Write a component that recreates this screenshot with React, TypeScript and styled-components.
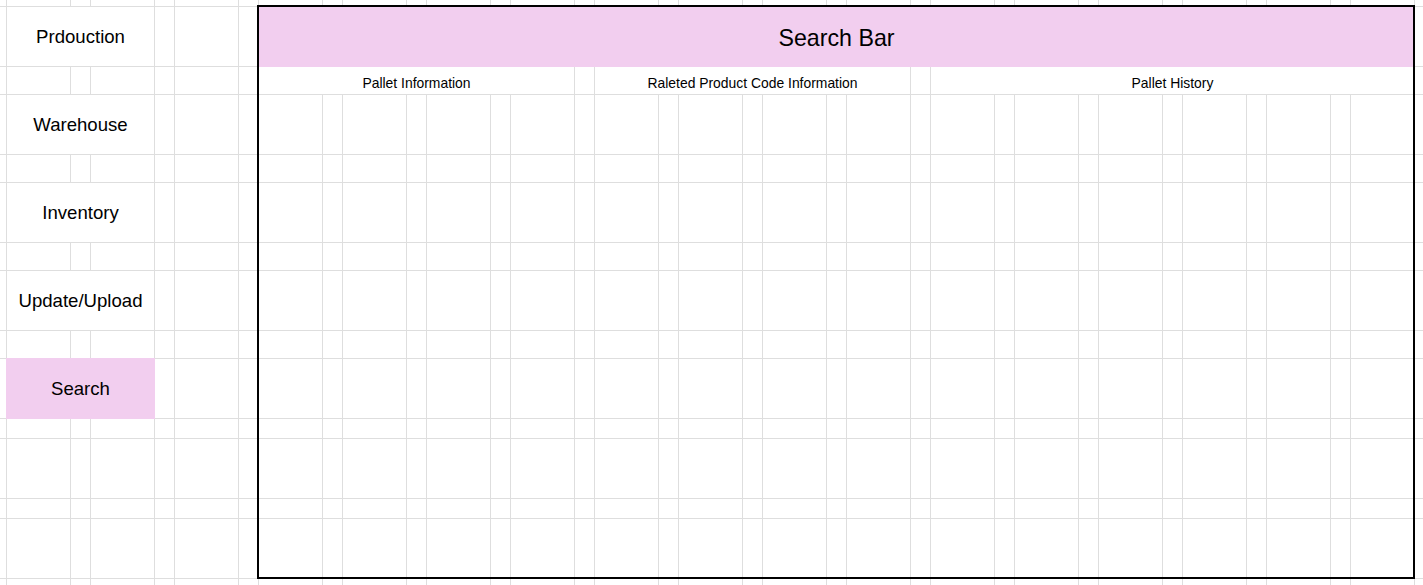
import React from 'react'
import styled, { createGlobalStyle, css } from 'styled-components'

const GRID_LINE = '#dedede'
const PINK = '#f2ceef'

// column / row track sizes, the 1px gap between tracks is the gridline
const COL_WIDTHS = Array.from({ length: 35 }, (_, i) => (i === 0 ? 6 : i % 2 ? 63 : 19))
const ROW_HEIGHTS = [6, 59, 27, 59, 27, 59, 27, 59, 27, 59, 19, 59, 19, 59, 19]

type Kind = 'plain' | 'nav' | 'title' | 'head'

interface Merge {
  row: number
  col: number
  span: number
  kind: Kind
  text: string
  fill?: boolean
}

const MERGES: Merge[] = [
  { row: 1, col: 1, span: 3, kind: 'nav', text: 'Prdouction' },
  { row: 3, col: 1, span: 3, kind: 'nav', text: 'Warehouse' },
  { row: 5, col: 1, span: 3, kind: 'nav', text: 'Inventory' },
  { row: 7, col: 1, span: 3, kind: 'nav', text: 'Update/Upload' },
  { row: 9, col: 1, span: 3, kind: 'nav', text: 'Search', fill: true },
  { row: 1, col: 7, span: 27, kind: 'title', text: 'Search Bar', fill: true },
  { row: 2, col: 7, span: 7, kind: 'head', text: 'Pallet Information' },
  { row: 2, col: 15, span: 7, kind: 'head', text: 'Raleted Product Code Information' },
  { row: 2, col: 23, span: 11, kind: 'head', text: 'Pallet History' },
]

const GlobalStyle = createGlobalStyle`
  html, body {
    margin: 0;
    padding: 0;
    background: #fff;
    overflow: hidden;
  }
  body {
    font-family: 'Liberation Sans', Arial, sans-serif;
    color: #000;
  }
`

const Sheet = styled.div`
  position: relative;
  display: grid;
  grid-template-columns: ${COL_WIDTHS.map((w) => `${w}px`).join(' ')};
  grid-template-rows: ${ROW_HEIGHTS.map((h) => `${h}px`).join(' ')};
  gap: 1px;
  width: max-content;
  background: ${GRID_LINE};
`

const kindStyles: Record<Kind, ReturnType<typeof css>> = {
  plain: css``,
  nav: css`
    font-size: 18.6px;
  `,
  title: css`
    font-size: 23.2px;
    padding-top: 3px;
  `,
  head: css`
    font-size: 13.9px;
    align-items: flex-end;
    padding-bottom: 3px;
  `,
}

const Cell = styled.div<{ $span: number; $kind: Kind; $fill?: boolean }>`
  grid-column: span ${(p) => p.$span};
  display: flex;
  align-items: center;
  justify-content: center;
  overflow: hidden;
  white-space: nowrap;
  background: ${(p) => (p.$fill ? PINK : '#fff')};
  ${(p) => p.$fill && css`box-shadow: 0 0 0 1px ${PINK};`}
  ${(p) => kindStyles[p.$kind]}
`

// thick outline around the search panel, drawn over the cells
const Frame = styled.div`
  position: absolute;
  grid-column: 8 / 35;
  grid-row: 2 / 15;
  inset: -2px -1px -1px -2px;
  border: 2px solid #000;
  pointer-events: none;
`

const App = () => {
  const cells: React.ReactNode[] = []
  ROW_HEIGHTS.forEach((_, r) => {
    let c = 0
    while (c < COL_WIDTHS.length) {
      const m = MERGES.find((x) => x.row === r && x.col === c)
      if (m) {
        cells.push(
          <Cell key={`${r}-${c}`} $span={m.span} $kind={m.kind} $fill={m.fill}>
            {m.text}
          </Cell>,
        )
        c += m.span
      } else {
        cells.push(<Cell key={`${r}-${c}`} $span={1} $kind="plain" />)
        c += 1
      }
    }
  })

  return (
    <>
      <GlobalStyle />
      <Sheet>
        {cells}
        <Frame />
      </Sheet>
    </>
  )
}

export default App
